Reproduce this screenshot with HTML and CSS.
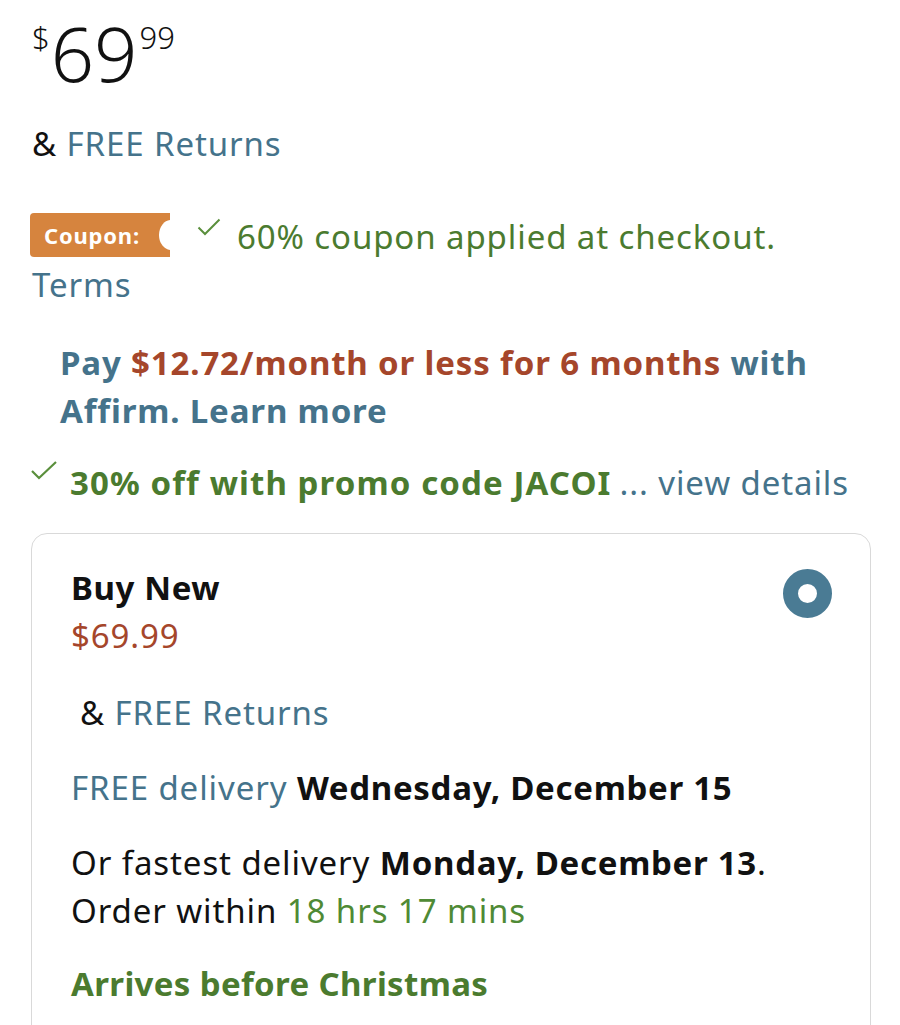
FILE: index.html
```html
<!DOCTYPE html>
<html>
<head>
<meta charset="utf-8">
<link rel="stylesheet" href="styles.css">
</head>
<body>
<div class="page">
  <div class="price">
    <span class="sym">$</span><span class="whole">69</span><span class="frac">99</span>
  </div>
  <div class="line returns">&amp; <span class="link">FREE Returns</span></div>

  <div class="line coupon-row">
    <span class="badge">Coupon:</span>
    <svg class="check" width="24" height="18" viewBox="0 0 24 18"><path d="M1.5 9.5 L8 16 L22.5 1.5" fill="none" stroke="#5a8f3c" stroke-width="2"/></svg>
    <span class="green">60% coupon applied at checkout.</span>
  </div>
  <div class="line link">Terms</div>

  <div class="affirm">
    <div class="aline"><span class="link">Pay </span><span class="red">$12.72/month or less for 6 months</span><span class="link"> with</span></div>
    <div class="aline"><span class="link">Affirm. Learn more</span></div>
  </div>

  <div class="line promo">
    <svg class="check small" width="28" height="22" viewBox="0 0 28 22"><path d="M2 10 L9 17 L26 1" fill="none" stroke="#5a8f3c" stroke-width="2.2"/></svg>
    <span class="promo-text">30% off with promo code JACOI</span><span class="link details">... view details</span>
  </div>

  <div class="card">
    <div class="card-head">
      <div>
        <div class="line bold">Buy New</div>
        <div class="line red">$69.99</div>
      </div>
      <div class="radio"></div>
    </div>
    <div class="line returns2">&amp; <span class="link">FREE Returns</span></div>
    <div class="line delivery"><span class="link">FREE delivery</span> <b>Wednesday, December 15</b></div>
    <div class="fastest">
      <div class="line">Or fastest delivery <b>Monday, December 13</b>.</div>
      <div class="line">Order within <span class="green2">18 hrs 17 mins</span></div>
    </div>
    <div class="line arrives">Arrives before Christmas</div>
  </div>
</div>
</body>
</html>
```

FILE: styles.css
```css
html, body {
  margin: 0;
  padding: 0;
  background: #fff;
}
body {
  font-family: "Noto Sans", "Open Sans", sans-serif;
  color: #111;
  font-size: 33px;
  letter-spacing: 0.9px;
  width: 900px;
  height: 1025px;
  overflow: hidden;
}
.page {
  padding-left: 32px;
  padding-right: 30px;
}
.line {
  line-height: 48px;
  white-space: nowrap;
}
.link { color: #45738b; }
.green { color: #4b7b2f; }
.green2 { color: #4f8a35; }
.red { color: #a5462b; }
b { font-weight: 700; }

.price {
  display: flex;
  align-items: flex-start;
  padding-top: 16px;
  height: 88px;
  letter-spacing: 0;
}
.sym {
  font-size: 31px;
  line-height: 30px;
  margin-top: 6px;
  font-weight: 300;
}
.whole {
  font-size: 76px;
  line-height: 74px;
  font-weight: 300;
  letter-spacing: 0;
  margin-left: 1px;
}
.frac {
  font-size: 31px;
  line-height: 28px;
  margin-top: 7px;
  margin-left: 2px;
  font-weight: 300;
}
.returns { margin-top: 16px; }

.coupon-row {
  margin-top: 45px;
  display: flex;
  align-items: center;
}
.badge {
  position: relative;
  display: inline-block;
  background: #d6843e;
  color: #fff;
  font-weight: 700;
  font-size: 22px;
  letter-spacing: 0.8px;
  line-height: 44px;
  height: 44px;
  padding: 0 30px 0 14px;
  margin-left: -2px;
  margin-top: -4px;
  border-radius: 4px 0 0 4px;
  overflow: hidden;
}
.badge::after {
  content: "";
  position: absolute;
  right: -13px;
  top: 50%;
  width: 24px;
  height: 30px;
  margin-top: -15px;
  border-radius: 50%;
  background: #fff;
}
.check {
  margin-left: 27px;
  margin-right: 16px;
  align-self: flex-start;
  margin-top: 5px;
}

.affirm {
  margin-top: 30px;
  padding-left: 28px;
  font-weight: 700;
  letter-spacing: 0.85px;
  line-height: 48px;
}
.aline { white-space: nowrap; }

.promo {
  margin-top: 24px;
  display: flex;
  align-items: flex-start;
}
.promo .check {
  margin: 2px 12px 0 -2px;
}
.promo-text {
  color: #4b7b2f;
  font-weight: 700;
  letter-spacing: 1.1px;
  display: inline-block;
  max-width: 545px;
  overflow: hidden;
  white-space: nowrap;
}
.details { margin-left: 8px; }

.card {
  margin-top: 26px;
  margin-left: -1px;
  width: 840px;
  height: 520px;
  box-sizing: border-box;
  border: 1.5px solid #d9d9d9;
  border-radius: 16px;
  padding: 30px 38px 0 39px;
}
.card-head {
  display: flex;
  justify-content: space-between;
  align-items: flex-start;
}
.bold { font-weight: 700; letter-spacing: 0.6px; }
.radio {
  width: 49px;
  height: 49px;
  box-sizing: border-box;
  border-radius: 50%;
  border: 15px solid #4a7b94;
  margin-top: 5px;
}
.returns2 { margin-top: 29px; padding-left: 9px; }
.delivery { margin-top: 27px; }
.delivery b, .fastest b { letter-spacing: 0.7px; }
.fastest { margin-top: 27px; }
.arrives {
  margin-top: 25px;
  color: #4b7b2f;
  font-weight: 700;
  letter-spacing: 0.35px;
}
```
